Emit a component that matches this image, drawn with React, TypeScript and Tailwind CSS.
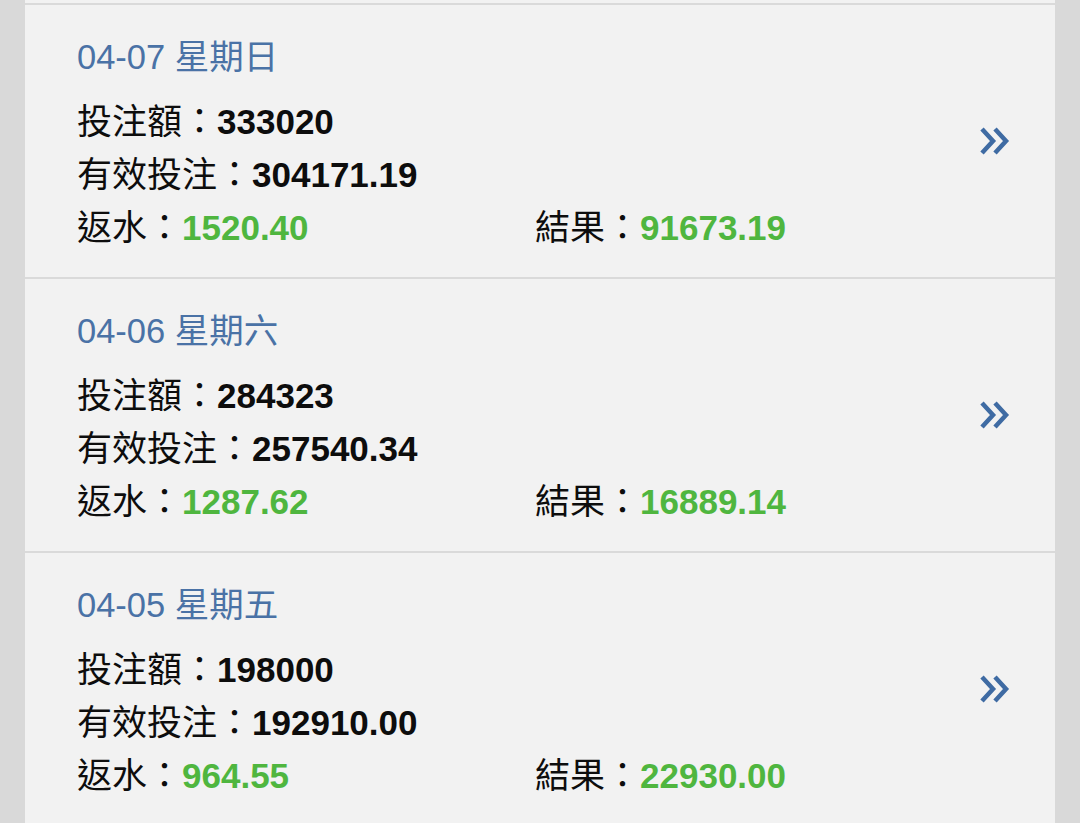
const rows = [
  { date: "04-07 星期日", bet: "333020", valid: "304171.19", rebate: "1520.40", result: "91673.19" },
  { date: "04-06 星期六", bet: "284323", valid: "257540.34", rebate: "1287.62", result: "16889.14" },
  { date: "04-05 星期五", bet: "198000", valid: "192910.00", rebate: "964.55", result: "22930.00" },
];

function DoubleChevron() {
  return (
    <svg className="mb-[9px]" width="32" height="30" viewBox="0 0 32 30" fill="none" stroke="#3f6ba3" strokeWidth="4.5" strokeLinecap="butt" strokeLinejoin="miter">
      <polyline points="3,3 14,15 3,27" />
      <polyline points="16,3 27,15 16,27" />
    </svg>
  );
}

function DayRow({ date, bet, valid, rebate, result }: (typeof rows)[number]) {
  return (
    <div className="flex items-center border-t-2 border-[#dadada] pl-[52px] pr-[44px] pt-8 pb-[23px]">
      <div className="flex-1">
        <div className="h-10 text-[34.5px] leading-10 text-[#4a72a6]">{date}</div>
        <div className="mt-[18px] text-[35px] leading-[53px] text-[#0d0d0d]">
          <div>
            投注額：<span className="font-bold">{bet}</span>
          </div>
          <div>
            有效投注：<span className="font-bold">{valid}</span>
          </div>
          <div className="flex">
            <div className="w-[458px]">
              返水：<span className="font-bold text-[#4fb63f]">{rebate}</span>
            </div>
            <div>
              結果：<span className="font-bold text-[#4fb63f]">{result}</span>
            </div>
          </div>
        </div>
      </div>
      <DoubleChevron />
    </div>
  );
}

export default function App() {
  return (
    <div
      className="h-[823px] w-full overflow-hidden bg-[#d9d9d9] px-[25px]"
      style={{ fontFamily: '"Liberation Sans", "Noto Sans CJK TC", sans-serif' }}
    >
      <div className="h-full bg-[#f2f2f2] pt-[3px]">
        {rows.map((r) => (
          <DayRow key={r.date} {...r} />
        ))}
      </div>
    </div>
  );
}
